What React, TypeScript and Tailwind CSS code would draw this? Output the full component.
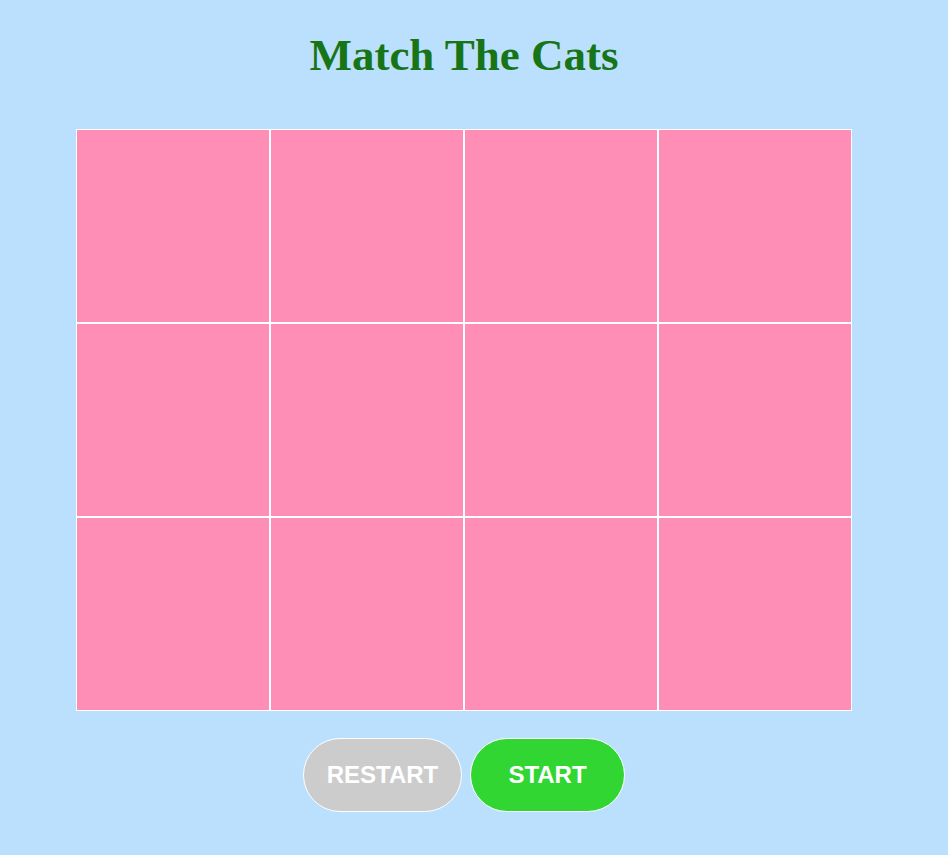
import React from 'react';

const cards = Array.from({ length: 12 }, (_, i) => i);

export default function App() {
  return (
    <div className="min-h-[855px] w-full bg-[#bbe0fd]">
      <div className="w-[928px] flex flex-col items-center">
        <h1
          className="pt-[27px] text-[45px] leading-[56px] font-bold text-[#177517]"
          style={{ fontFamily: '"Liberation Serif", "Times New Roman", serif' }}
        >
          Match The Cats
        </h1>
        <div className="mt-[46px] grid grid-cols-4 w-[776px]">
          {cards.map((i) => (
            <div key={i} className="h-[194px] w-[194px] border border-white bg-[#ff8eb7]" />
          ))}
        </div>
        <div
          className="mt-[27px] flex gap-2"
          style={{ fontFamily: '"Liberation Sans", Arial, sans-serif' }}
        >
          <button className="h-[74px] w-[159px] rounded-full border border-white bg-[#cccccc] text-[24px] font-bold text-white">
            RESTART
          </button>
          <button className="h-[74px] w-[155px] rounded-full border border-white bg-[#32d632] text-[24px] font-bold text-white">
            START
          </button>
        </div>
      </div>
    </div>
  );
}
